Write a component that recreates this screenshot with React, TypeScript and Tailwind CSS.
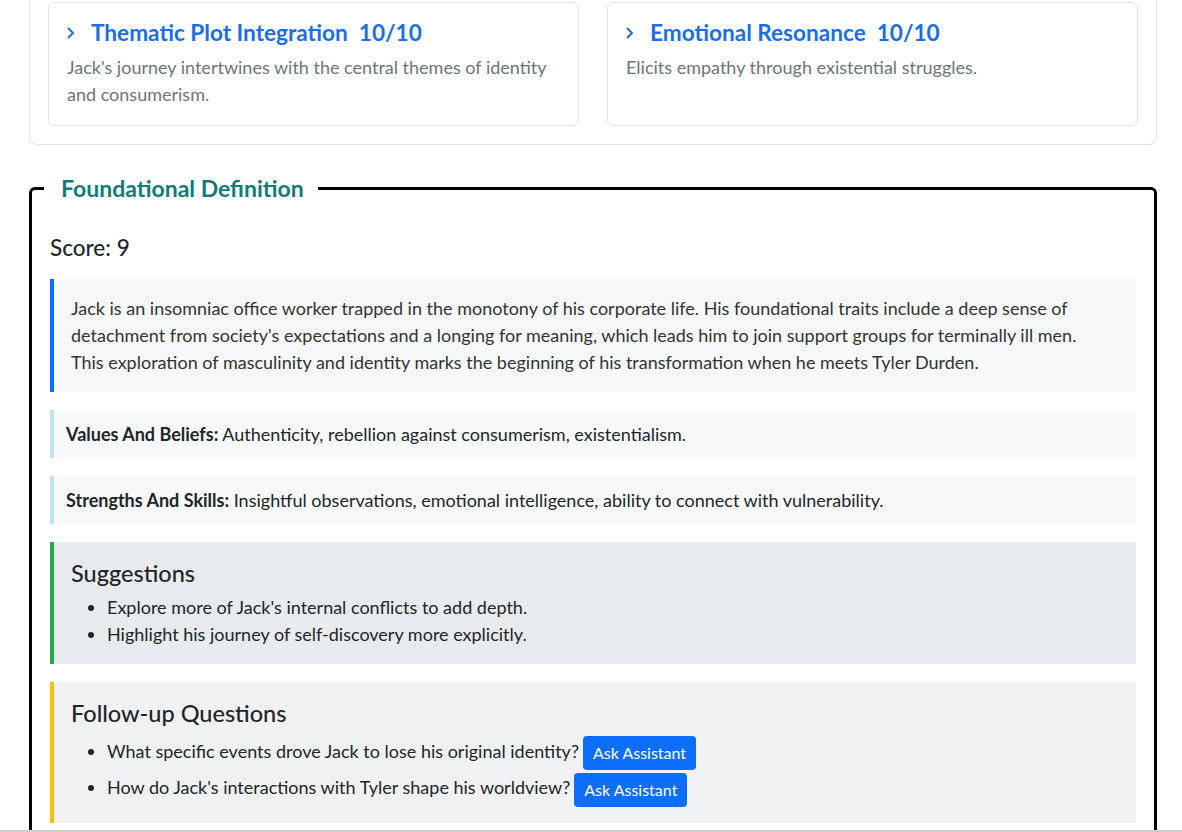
import React from "react";

function Chevron() {
  return (
    <svg width="10" height="14" viewBox="0 0 10 14" className="mr-[14px] shrink-0" fill="none">
      <path d="M1.5 2.5 L6 7 L1.5 11.5" stroke="#1a6fe6" strokeWidth="2" strokeLinecap="round" strokeLinejoin="round" />
    </svg>
  );
}

function ScoreCard({ title, score, desc }: { title: string; score: string; desc: string }) {
  return (
    <div className="border border-[#dee2e6] rounded-[6px] px-[18px] pt-[17px] pb-[17px] bg-white">
      <div className="flex items-center text-[22.6px] leading-[26px] font-bold text-[#1a6fe6]">
        <Chevron />
        <span className="whitespace-pre">{title}  {score}</span>
      </div>
      <p className="mt-[8px] text-[18px] leading-[27px] text-[#6c757d]">{desc}</p>
    </div>
  );
}

function AskButton() {
  return (
    <button className="ml-[4px] bg-[#0d6efd] text-white text-[16px] leading-[22px] px-[10px] py-[6px] rounded-[4px] align-middle">
      Ask Assistant
    </button>
  );
}

export default function App() {
  return (
    <div className="min-h-screen bg-white text-[#212529] font-['Lato','Liberation_Sans',sans-serif] overflow-hidden">
      <div className="pl-[29px] pr-[25px] -mt-[17px]">
        <div className="border border-[#dee2e6] rounded-[8px] p-[18px] grid grid-cols-2 gap-[28px]">
          <ScoreCard
            title="Thematic Plot Integration"
            score="10/10"
            desc="Jack's journey intertwines with the central themes of identity and consumerism."
          />
          <ScoreCard
            title="Emotional Resonance"
            score="10/10"
            desc="Elicits empathy through existential struggles."
          />
        </div>

        <fieldset className="mt-[29px] border-[3px] border-black rounded-[6px] px-[18px] pb-[20px]">
          <legend className="-ml-[6px] pl-[17px] pr-[14px] text-[23px] leading-[28px] font-bold text-[#117a7a]">
            Foundational Definition
          </legend>
          <div className="pt-[32px] text-[22.5px] leading-[27px] font-medium">Score: 9</div>
          <div className="mt-[18px] flex flex-col gap-[18px]">
            <div className="border-l-[4px] border-[#0d6efd] bg-[#f6f8fa] pl-[17px] pr-[26px] py-[16px] text-[18px] leading-[27px] text-[#333]">
              Jack is an insomniac office worker trapped in the monotony of his corporate life. His foundational traits include a deep sense of detachment from society's expectations and a longing for meaning, which leads him to join support groups for terminally ill men. This exploration of masculinity and identity marks the beginning of his transformation when he meets Tyler Durden.
            </div>
            <div className="border-l-[4px] border-[#bfe3ea] bg-[#f8f9fa] px-[12px] py-[10px] text-[18px] leading-[28px]">
              <b className="font-bold">Values And Beliefs:</b> Authenticity, rebellion against consumerism, existentialism.
            </div>
            <div className="border-l-[4px] border-[#bfe3ea] bg-[#f8f9fa] px-[12px] py-[10px] text-[18px] leading-[28px]">
              <b className="font-bold">Strengths And Skills:</b> Insightful observations, emotional intelligence, ability to connect with vulnerability.
            </div>
            <div className="border-l-[4px] border-[#28a745] bg-[#e9ecef] px-[17px] py-[16px]">
              <h3 className="text-[23.5px] leading-[30px] font-medium mb-[6px]">Suggestions</h3>
              <ul className="list-disc pl-[36px] text-[18px] leading-[27px]">
                <li>Explore more of Jack's internal conflicts to add depth.</li>
                <li>Highlight his journey of self-discovery more explicitly.</li>
              </ul>
            </div>
            <div className="border-l-[4px] border-[#ffc107] bg-[#f1f2f4] px-[17px] pt-[16px] pb-[16px]">
              <h3 className="text-[23.5px] leading-[30px] font-medium mb-[6px]">Follow-up Questions</h3>
              <ul className="list-disc pl-[36px] text-[18px] leading-[34px]">
                <li>What specific events drove Jack to lose his original identity?<AskButton /></li>
                <li>How do Jack's interactions with Tyler shape his worldview?<AskButton /></li>
              </ul>
            </div>
          </div>
        </fieldset>
      </div>
      <div className="fixed left-0 right-0 bottom-0 h-[2px] bg-[#d0d0d0]" />
    </div>
  );
}
